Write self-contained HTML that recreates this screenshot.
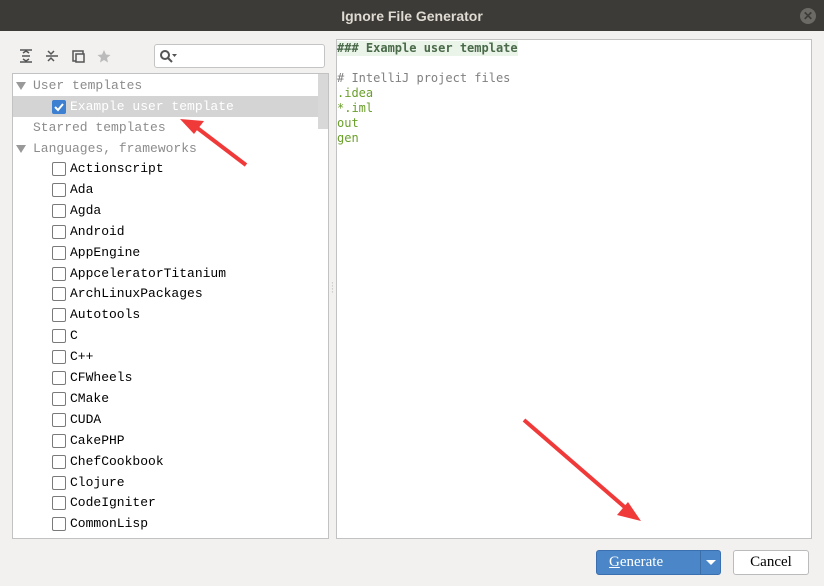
<!DOCTYPE html>
<html><head><style>
*{margin:0;padding:0;box-sizing:border-box}
body{width:824px;height:586px;background:#f2f1f0;position:relative;overflow:hidden;font-family:"Liberation Mono",monospace}
.title{position:absolute;left:0;top:0;width:824px;height:31px;background:#3c3b37;color:#dfdbd2;font:bold 14px "Liberation Sans",sans-serif;text-align:center;line-height:32px}
.close{position:absolute;right:8px;top:8px;width:16px;height:16px;border-radius:8px;background:#6b6a65;color:#3c3b37;font-size:12px;line-height:16px}
.search{position:absolute;left:154px;top:44px;width:171px;height:24px;border:1px solid #c4c4c4;border-radius:3px;background:#fff}
.list{position:absolute;left:12px;top:73px;width:317px;height:466px;border:1px solid #c2c2c2;background:#fff;overflow:hidden}
.row{position:absolute;left:0;height:21px;width:305px;font-size:13px;line-height:21px;color:#000;white-space:pre}
.grey{color:#8c8c8c}
.tri{position:absolute;left:3px;top:7px;border-left:5px solid transparent;border-right:5px solid transparent;border-top:8px solid #999}
.cb{position:absolute;left:39px;top:4px;width:14px;height:14px;border:1px solid #7a7a7a;border-radius:2px;background:#fff}
.cb.on{background:#3d7fd0;border-color:#3d7fd0}
.sb{position:absolute;left:305px;top:0;width:11px;height:55px;background:#d8d8d8}
.editor{position:absolute;left:336px;top:39px;width:476px;height:500px;border:1px solid #c2c2c2;background:#fff;font:12px "DejaVu Sans Mono",monospace;line-height:15px;padding-top:1px}
.editor div{height:15px;white-space:pre}
.btn{position:absolute;top:550px;height:25px;font:15px "Liberation Serif",serif;line-height:23px;text-align:center;border-radius:3px}
</style></head><body>
<div class="title">Ignore File Generator<div class="close">✕</div></div>
<svg style="position:absolute;left:18px;top:48px" width="100" height="18">
<g stroke="#555" stroke-width="1.5" fill="none">
<path d="M2 2h12M2 14h12M5 5l3-2 3 2M5 11l3 2 3-2M4 8h8"/>
<path d="M30 3l3 3 3-3M30 13l3-3 3 3M28 8h12"/>
<rect x="55" y="3" width="10" height="10"/><rect x="58" y="6" width="8" height="8" fill="#f2f1f0"/>
</g>
<path d="M86 2l2 4.5 4.5.5-3.5 3 1 4.5-4-2.5-4 2.5 1-4.5-3.5-3 4.5-.5z" fill="#bbb"/>
</svg>
<div class="search"><svg width="30" height="22"><circle cx="10" cy="10" r="4" stroke="#555" stroke-width="2" fill="none"/><path d="M13 13l4 4" stroke="#555" stroke-width="2"/><path d="M17 9h5l-2.5 3z" fill="#555"/></svg></div>
<div class="list">
<div class="sb"></div>
<div class="row grey" style="top:1px"><span class="tri"></span><span style="position:absolute;left:20px">User templates</span></div>
<div class="row" style="top:22px;background:#d4d4d4;color:#fff"><span class="cb on"><svg width="12" height="12" style="position:absolute;left:0;top:0"><path d="M2 6l3 3 5-6" stroke="#fff" stroke-width="2" fill="none"/></svg></span><span style="position:absolute;left:57px">Example user template</span></div>
<div class="row grey" style="top:43px"><span style="position:absolute;left:20px">Starred templates</span></div>
<div class="row grey" style="top:64px"><span class="tri"></span><span style="position:absolute;left:20px">Languages, frameworks</span></div>
</div>
<div id="items"></div>
<div class="editor">
<div style="color:#4a6a4a;font-weight:bold;background:#eaf4e8;display:inline-block">### Example user template</div>
<div></div>
<div style="color:#808080"># IntelliJ project files</div>
<div style="color:#6a9f2a">.idea</div>
<div style="color:#6a9f2a">*.iml</div>
<div style="color:#6a9f2a">out</div>
<div style="color:#6a9f2a">gen</div>
</div>
<div style="position:absolute;left:330px;top:282px;color:#bbb;font-size:8px;line-height:3px">·<br>·<br>·<br>·</div>
<div class="btn" style="left:596px;width:125px;background:#4a86c8;border:1px solid #3a70b0;color:#fff"><span style="position:absolute;left:12px;top:0"><u>G</u>enerate</span><span style="position:absolute;left:103px;top:0;width:1px;height:23px;background:#3a6ea8"></span><span style="position:absolute;left:109px;top:9px;border-left:5px solid transparent;border-right:5px solid transparent;border-top:5px solid #fff"></span></div>
<div class="btn" style="left:733px;width:76px;background:#fff;border:1px solid #bbb;color:#000">Cancel</div>
<svg style="position:absolute;left:0;top:0" width="824" height="586">
<path d="M246 165L196 127" stroke="#f03a3a" stroke-width="4"/><path d="M180 119l24 2-10 13z" fill="#f03a3a"/>
<path d="M524 420L628 510" stroke="#f03a3a" stroke-width="4"/><path d="M641 521l-24-6 11-13z" fill="#f03a3a"/>
</svg>
<script>
var n=["Actionscript","Ada","Agda","Android","AppEngine","AppceleratorTitanium","ArchLinuxPackages","Autotools","C","C++","CFWheels","CMake","CUDA","CakePHP","ChefCookbook","Clojure","CodeIgniter","CommonLisp"],h="";
n.forEach(function(s,i){h+='<div class="row" style="left:13px;top:'+(158+i*20.9)+'px"><span class="cb"></span><span style="position:absolute;left:57px">'+s+'</span></div>'});
document.getElementById('items').innerHTML=h;
</script>
</body></html>
